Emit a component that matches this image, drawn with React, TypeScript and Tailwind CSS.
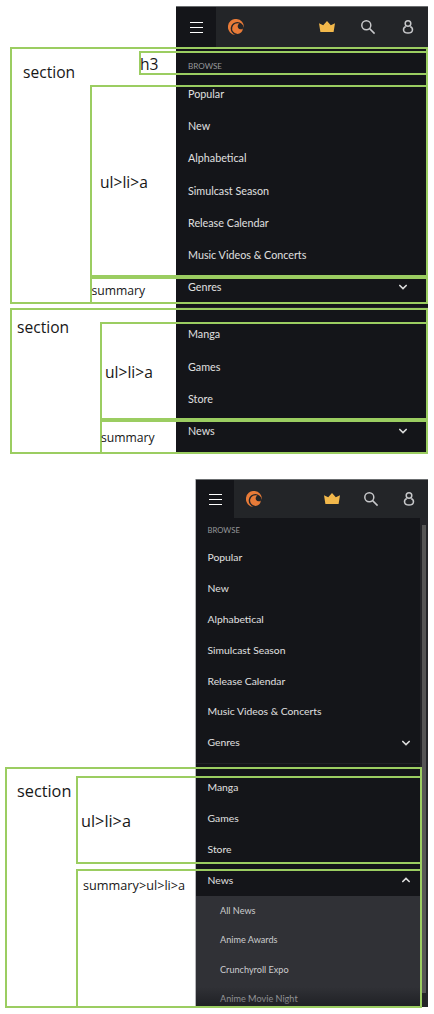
import React from "react";

const browse = ["Popular", "New", "Alphabetical", "Simulcast Season", "Release Calendar", "Music Videos & Concerts"];
const more = ["Manga", "Games", "Store"];
const news = ["All News", "Anime Awards", "Crunchyroll Expo", "Anime Movie Night"];

function Logo() {
  return (
    <svg viewBox="0 0 24 24" className="size-4 text-[#e87b38]" fill="currentColor">
      <path d="M23.8 13A12 12 0 1 0 11 23.9A9.9 9.9 0 1 1 23.8 13Z" />
      <path d="M17.2 6.9A8 8 0 1 0 22.2 14.2A4.5 4.5 0 1 1 17.2 6.9Z" />
    </svg>
  );
}

function Crown() {
  return (
    <svg viewBox="0 0 16 12" className="h-3 w-4" fill="#f2b84b">
      <path d="M0 2.2L4.2 4.2L8 0L11.8 4.2L16 2.2L14.6 11H1.4Z" />
    </svg>
  );
}

function Search() {
  return (
    <svg viewBox="0 0 16 16" className="size-4" fill="none" stroke="#c7c8ca" strokeWidth="1.5">
      <circle cx="6.3" cy="6.3" r="4.5" />
      <path d="M9.6 9.6L14.6 14.6" />
    </svg>
  );
}

function Person() {
  return (
    <svg viewBox="0 0 12 16" className="h-4 w-3" fill="none" stroke="#c7c8ca" strokeWidth="1.5">
      <circle cx="6" cy="4.5" r="2.8" />
      <path d="M3.7 7.5C.4 9.2.6 14.1 6 14.1S11.6 9.2 8.3 7.5" />
    </svg>
  );
}

function Chevron({ up = false }: { up?: boolean }) {
  return (
    <svg viewBox="0 0 8 6" className={up ? "h-1.5 w-2 rotate-180" : "h-1.5 w-2"} fill="none" stroke="#dedede" strokeWidth="1.6">
      <path d="M.3 1L4 4.6L7.7 1" />
    </svg>
  );
}

function Menu({ name, row, up = false }: { name: string; row: string; up?: boolean }) {
  return (
    <div className={`flex shrink-0 items-center justify-between ${row}`}>
      <span>{name}</span>
      <Chevron up={up} />
    </div>
  );
}

function Links({ items, row }: { items: string[]; row: string }) {
  return (
    <ul>
      {items.map((t) => (
        <li key={t} className={`flex items-center ${row}`}>
          <a>{t}</a>
        </li>
      ))}
    </ul>
  );
}

function Header({ compact = false }: { compact?: boolean }) {
  return (
    <header className={`flex shrink-0 border-t border-[#6b6e70] bg-[#232528] ${compact ? "h-[39px]" : "h-[41px]"}`}>
      <div className={`flex items-center justify-center bg-[#141519] ${compact ? "w-[38px]" : "w-10"}`}>
        <div className="flex h-[11px] w-[13px] flex-col justify-between">
          <span className="h-px bg-white" />
          <span className="h-px bg-white" />
          <span className="h-px bg-white" />
        </div>
      </div>
      <div className={`flex flex-1 items-center ${compact ? "pl-[11.5px] pr-[13.5px]" : "pl-3 pr-3.5"}`}>
        <Logo />
        <div className="ml-auto flex items-center">
          <Crown />
          <div className={compact ? "ml-[22.5px] mr-6" : "ml-[24.5px] mr-[26.5px]"}>
            <Search />
          </div>
          <Person />
        </div>
      </div>
    </header>
  );
}

function Box({ place }: { place: string }) {
  return <div className={`pointer-events-none absolute border-2 border-[#9bcd61] ${place}`} />;
}

function Note({ place, children }: { place: string; children: string }) {
  return (
    <span className={`absolute whitespace-nowrap font-['Open_Sans',sans-serif] leading-5 text-[#171717] ${place}`}>
      {children}
    </span>
  );
}

export default function App() {
  return (
    <main className="relative flex h-[1014px] w-[434px] flex-col items-end overflow-hidden bg-white pr-1.5 pt-1.5 font-['Lato',sans-serif] text-[10.75px] text-[#e0e0e0]">
      <nav className="flex h-[447px] w-[252px] flex-col bg-[#141519]">
        <Header />
        <div className="flex flex-col pl-3 pr-[21px]">
          <h3 className="flex h-[31px] items-center pt-[7px] text-[8.1px] text-[#97989b]">BROWSE</h3>
          <Links items={browse} row="h-[32.2px]" />
          <Menu name="Genres" row="h-[32.2px]" />
        </div>
        <div className="mt-1 h-0.5 shrink-0 bg-[#212227]" />
        <div className="flex flex-col pl-3 pr-[21px] pt-[9px]">
          <Links items={more} row="h-[32.2px]" />
          <Menu name="News" row="h-[32.2px]" />
        </div>
      </nav>

      <nav className="mt-[26px] flex h-[528px] w-[233px] flex-col border-l border-[#b5b6b9] bg-[#141519] text-[10.35px]">
        <Header compact />
        <div className="flex min-h-0 flex-1">
          <div className="relative flex flex-1 flex-col overflow-hidden">
            <div className="flex shrink-0 flex-col pl-[11.5px] pr-[10px]">
              <h3 className="flex h-[24.5px] items-center pt-px text-[7.7px] text-[#97989b]">BROWSE</h3>
              <Links items={browse} row="h-[30.85px]" />
              <Menu name="Genres" row="h-[30.85px]" />
            </div>
            <div className="mt-[5px] h-px shrink-0 bg-[#212227]" />
            <div className="flex shrink-0 flex-col pl-[11.5px] pr-[10px] pt-2">
              <Links items={more} row="h-[30.85px]" />
              <Menu name="News" row="h-[30.85px]" up />
            </div>
            <div className="shrink-0 bg-[#303136] pl-6 text-[9.15px] text-[#cccdcf]">
              <Links items={news} row="h-[29.6px]" />
            </div>
            <div className="absolute bottom-0 h-5 w-full bg-gradient-to-b from-transparent to-[#141519]/60" />
          </div>
          <div className="flex w-2 justify-center bg-[#242529] pt-[7px]">
            <div className="h-[468px] w-1 bg-[#565656]" />
          </div>
        </div>
      </nav>

      <Box place="left-[10px] top-[47px] h-[257px] w-[418px]" />
      <Box place="left-[139px] top-[51px] h-[24px] w-[289px]" />
      <Box place="left-[90px] top-[85px] h-[192px] w-[338px]" />
      <Box place="left-[90px] top-[277px] h-[27px] w-[338px]" />
      <Box place="left-[10px] top-[308px] h-[146px] w-[418px]" />
      <Box place="left-[100px] top-[322px] h-[98px] w-[328px]" />
      <Box place="left-[100px] top-[420px] h-[34px] w-[328px]" />
      <Box place="left-[5px] top-[767px] h-[241px] w-[417px]" />
      <Box place="left-[76px] top-[776px] h-[88px] w-[346px]" />
      <Box place="left-[76px] top-[869px] h-[139px] w-[346px]" />

      <Note place="left-[23px] top-[62px] text-[15.6px]">section</Note>
      <Note place="left-[140px] top-[54px] text-[15.6px]">h3</Note>
      <Note place="left-[100px] top-[172px] text-[15.6px]">ul&gt;li&gt;a</Note>
      <Note place="left-[91.5px] top-[281px] text-[12.2px]">summary</Note>
      <Note place="left-[17px] top-[317px] text-[15.6px]">section</Note>
      <Note place="left-[105px] top-[362px] text-[15.6px]">ul&gt;li&gt;a</Note>
      <Note place="left-[101px] top-[428px] text-[12.2px]">summary</Note>
      <Note place="left-[17px] top-[781px] text-[16.3px]">section</Note>
      <Note place="left-[81px] top-[811px] text-[16.3px]">ul&gt;li&gt;a</Note>
      <Note place="left-[83px] top-[875px] text-[12.7px]">summary&gt;ul&gt;li&gt;a</Note>
    </main>
  );
}
